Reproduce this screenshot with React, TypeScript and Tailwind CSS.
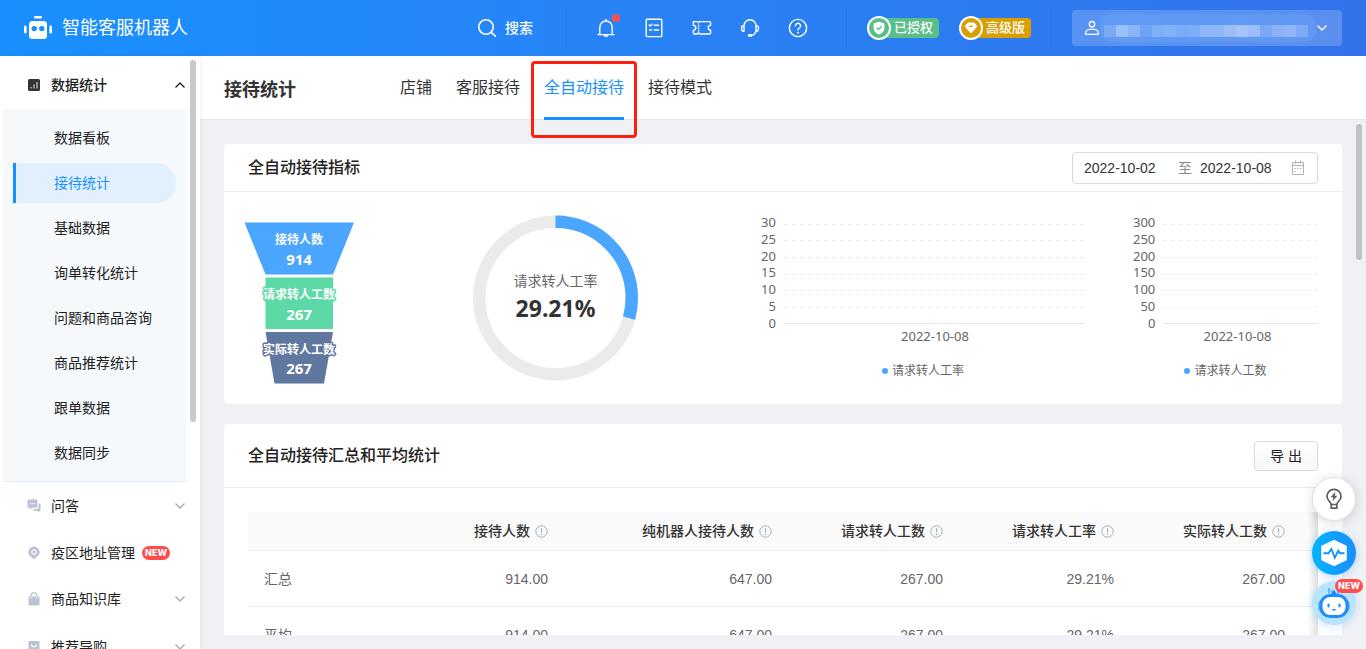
import React from "react";

const TEXT_FONT =
  "font-['Liberation_Sans','Noto_Sans_CJK_SC',sans-serif]";
const CHART_FONT = "font-['Noto_Sans','Noto_Sans_CJK_SC',sans-serif]";

function Logo() {
  return (
    <svg width="28" height="24" viewBox="0 0 28 24" fill="#fff" aria-hidden="true">
      <rect x="10" y="0" width="8" height="2.6" rx="1.3" />
      <rect x="0" y="9.500" width="2.6" height="8" rx="1.3" />
      <rect x="25.4" y="9.500" width="2.6" height="8" rx="1.3" />
      <rect x="5" y="5" width="18" height="18" rx="3.5" />
      <circle cx="10.2" cy="12.600" r="2.7" fill="#1b8dff" />
      <circle cx="17.8" cy="12.600" r="2.7" fill="#1b8dff" />
    </svg>
  );
}

function Line({ children, size = 20, sw = 1.4 }: { children: React.ReactNode; size?: number; sw?: number }) {
  return (
    <svg
      width={size}
      height={size}
      viewBox="0 0 20 20"
      fill="none"
      stroke="currentColor"
      strokeWidth={sw}
      strokeLinecap="round"
      strokeLinejoin="round"
      aria-hidden="true"
    >
      {children}
    </svg>
  );
}

const SearchIcon = () => (
  <Line sw={1.6}>
    <circle cx="9" cy="9" r="7.2" />
    <path d="M14.3 14.3 18.4 18.2" />
  </Line>
);
const BellIcon = () => (
  <Line>
    <path d="M2 16.6h16M3.8 16.4V9.2a6.2 6.2 0 0 1 12.4 0v7.2M10 3V1.4M8.2 16.8a1.8 1.6 0 0 0 3.6 0" />
  </Line>
);
const ListIcon = () => (
  <Line>
    <rect x="2.2" y="1.2" width="15.6" height="17.4" rx="1" />
    <path d="M5.2 7l1 1L8 6.2M10.2 7.2h4.4M5.6 12h1.8M10.2 12h4.4" />
  </Line>
);
const TicketIcon = () => (
  <Line>
    <path d="M1.600 3.600h3.800l1.200 1.200 1.200-1.200h9.600a1.200 1.200 0 0 1 1.200 1.200v2.600a2.400 2.400 0 0 0 0 4.800v2.600a1.200 1.200 0 0 1-1.200 1.200H7.800l-1.200-1.200-1.200 1.200H2.600a1.200 1.200 0 0 1-1.200-1.200v-2.600a2.400 2.400 0 0 0 0-4.800V3.800z" />
    <path d="M6.600 7.200v.8M6.600 10v.8M6.600 12.600v.4" />
  </Line>
);
const HeadsetIcon = () => (
  <Line>
    <path d="M4 13.2H3.2A1.6 1.6 0 0 1 1.6 11.6V9.4a1.6 1.6 0 0 1 1.6-1.6H4zM16 7.8h.8a1.6 1.6 0 0 1 1.6 1.6v2.2a1.6 1.6 0 0 1-1.6 1.6H16zM4 7.8a6 6 0 0 1 12 0M16 13.2c-.6 2.4-2 3.800-4.400 4.300" />
    <path d="M9.2 17.4h1.6" strokeWidth="2.6" />
  </Line>
);
const HelpIcon = () => (
  <Line>
    <circle cx="10" cy="10" r="8.6" />
    <path d="M7.4 7.8a2.6 2.5 0 1 1 3.9 2.2c-.9.5-1.3.9-1.3 1.9" />
    <path d="M10 14.6v.1" strokeWidth="1.8" />
  </Line>
);

function Chevron({ up = false, className = "" }: { up?: boolean; className?: string }) {
  return (
    <svg width="12" height="8" viewBox="0 0 12 8" fill="none" stroke="currentColor" strokeWidth="1.4" className={className} aria-hidden="true">
      <path d={up ? "M1.5 6.5 6 2l4.5 4.5" : "M1.5 1.5 6 6l4.5-4.5"} />
    </svg>
  );
}

const MASK = [
  "#7baaf5", "#9ac0fa", "#8ab6f8", "#6ea3f5", "#7fb0f7", "#82b2f8", "#7aabf6", "#7cadf7", "#8fb6f7",
  "#8fb6f7", "#9bbdf8", "#a5c4f9", "#9bbdf9", "#7ca9f5", "#8db1f6", "#91b5f6", "#7ea9f5",
];

function Header() {
  const tools = [
    { label: "通知", icon: <BellIcon />, dot: true },
    { label: "任务", icon: <ListIcon /> },
    { label: "工单", icon: <TicketIcon /> },
    { label: "客服", icon: <HeadsetIcon /> },
    { label: "帮助", icon: <HelpIcon /> },
  ];
  return (
    <header className="flex h-14 shrink-0 items-center bg-linear-to-r from-[#1890ff] to-[#3273ec] px-6 text-white">
      <a href="#" className="flex items-center gap-2.5">
        <Logo />
        <span className="text-lg leading-7">智能客服机器人</span>
      </a>
      <div className="ml-auto flex items-center">
        <button type="button" className="flex items-center gap-2 pr-8 text-sm font-medium">
          <SearchIcon />
          搜索
        </button>
        <span className="h-10 w-px bg-black/5" />
        <div className="flex pl-4 pr-6">
          {tools.map((t) => (
            <button key={t.label} type="button" aria-label={t.label} className="relative flex w-12 justify-center">
              {t.icon}
              {t.dot && <span className="absolute -top-1 right-2.5 size-2 rounded-full bg-[#ff4d4f]" />}
            </button>
          ))}
        </div>
        <span className="h-10 w-px bg-black/5" />
        <div className="flex gap-5 px-5">
          <span className="flex h-6 w-[72px] items-center">
            <span className="z-10 flex size-6 shrink-0 items-center justify-center rounded-full border-2 border-white bg-[#57bf87]">
              <svg width="14" height="14" viewBox="0 0 14 14" aria-hidden="true">
                <path d="M7 .8 12.4 2.6v4.6c0 3-2.2 5-5.4 6.2C3.800 12.200 1.600 10.200 1.600 7.200V2.600z" fill="#fff" />
                <path d="M4.500 6.600 6.400 8.500 9.600 5.300" fill="none" stroke="#57bf87" strokeWidth="1.300" />
              </svg>
            </span>
            <span className="-ml-3 flex h-5 flex-1 items-center justify-end rounded bg-[#57bf87] pr-1.5 text-[13px] font-medium">已授权</span>
          </span>
          <span className="flex h-6 w-[72px] items-center">
            <span className="z-10 flex size-6 shrink-0 items-center justify-center rounded-full border-2 border-white bg-[#d99e00]">
              <svg width="14" height="14" viewBox="0 0 14 14" aria-hidden="true">
                <path d="M3.800 2h6.400l2.600 3.400L7 12 1.200 5.400z" fill="#fff" stroke="#fff" strokeWidth="1" strokeLinejoin="round" />
                <path d="M5.200 5.400h3.600" stroke="#d99e00" strokeWidth="1.200" />
              </svg>
            </span>
            <span className="-ml-3 flex h-5 flex-1 items-center justify-end rounded bg-[#d99e00] pr-1.5 text-[13px] font-medium">高级版</span>
          </span>
        </div>
        <span className="h-10 w-px bg-black/5" />
        <button type="button" aria-label="账号" className="ml-5 flex h-9 w-[270px] items-center rounded bg-white/20 pl-3 pr-3.5">
          <svg width="16" height="16" viewBox="0 0 16 16" fill="none" stroke="#fff" strokeWidth="1.300" aria-hidden="true">
            <circle cx="8" cy="4.200" r="2.700" />
            <path d="M2.600 14.400C1 14.400 1.200 12 2.600 10.600 4.800 8.500 11.200 8.500 13.400 10.600c1.400 1.400 1.600 3.800 0 3.800z" />
          </svg>
          <span className="flex h-7 flex-1 items-center rounded-xl bg-[#659ff6]/60 pl-1">
            <span className="mt-1.5 flex h-3">
              {MASK.map((c, i) => (
                <span key={i} className="w-3" style={{ backgroundColor: c }} />
              ))}
            </span>
          </span>
          <Chevron />
        </button>
      </div>
    </header>
  );
}

const SUB_ITEMS = ["数据看板", "接待统计", "基础数据", "询单转化统计", "问题和商品咨询", "商品推荐统计", "跟单数据", "数据同步"];

const NewTag = () => (
  <span className="rounded-full bg-[#ff4d4f] px-[3px] text-[9px] leading-[14px] font-extrabold text-white font-['Inter',sans-serif]">NEW</span>
);

function NavRow({ icon, label, tag, chevron = true }: { icon: React.ReactNode; label: string; tag?: boolean; chevron?: boolean }) {
  return (
    <a href="#" className={`flex shrink-0 items-center pl-[27px] pr-3.5 ${chevron ? "h-12" : "h-[45px]"}`}>
      <svg width="14" height="14" viewBox="0 0 14 14" fill="#b9c3d3" aria-hidden="true">{icon}</svg>
      <span className="ml-2.5">{label}</span>
      {tag && <span className="ml-[7px] flex"><NewTag /></span>}
      {chevron && <Chevron className="ml-auto text-[#aaa]" />}
    </a>
  );
}

function Sidebar() {
  return (
    <nav className="relative z-10 flex w-[200px] shrink-0 flex-col overflow-hidden bg-white pt-[5px] text-sm text-[#222] shadow-[1px_0_5px_rgba(0,0,0,0.06)]">
      <a href="#" className="flex h-12 shrink-0 items-center pl-[27px] pr-3.5 font-medium">
        <svg width="14" height="14" viewBox="0 0 14 14" aria-hidden="true">
          <rect x="1" y="1" width="12" height="12" rx="1.500" fill="#333" />
          <path d="M4 10.500V9M7 10.500v-4M10 10.500V4" stroke="#ddd" strokeWidth="1.100" />
        </svg>
        <span className="ml-2.5">数据统计</span>
        <Chevron up className="ml-auto" />
      </a>
      <ul className="ml-[3px] mr-3.5 flex shrink-0 flex-col gap-[5px] border-b border-[#e1edfb] bg-[#f5f9fc] pt-[9px] pb-2">
        {SUB_ITEMS.map((s) => (
          <li key={s} className="ml-2.5 mr-2.5">
            <a
              href="#"
              className={
                s === "接待统计"
                  ? "flex h-10 items-center rounded-r-full border-l-3 border-[#1890ff] bg-[#e2f0fe] pl-[38px] text-[#1890ff]"
                  : "flex h-10 items-center border-l-3 border-transparent pl-[38px]"
              }
            >
              {s}
            </a>
          </li>
        ))}
      </ul>
      <NavRow
        label="问答"
        icon={
          <>
            <path d="M1.500.5h7.800a1 1 0 0 1 1 1v6.200a1 1 0 0 1-1 1H5.500L3.200 10.500V8.700H1.500a1 1 0 0 1-1-1V1.500a1 1 0 0 1 1-1z" />
            <path d="M11.500 4.500h1a1 1 0 0 1 1 1v5.200a1 1 0 0 1-1 1v1.600L10.400 11.700H6.500V10h5z" />
            <path d="M3 4h1.100v1.200H3zM5 4h1.100v1.200H5zM7 4h1.100v1.200H7z" fill="#fff" />
          </>
        }
      />
      <NavRow
        label="疫区地址管理"
        tag
        chevron={false}
        icon={
          <>
            <path d="M7 .5a5.600 5.600 0 0 1 5.600 5.600C12.600 9.300 9.500 11.300 7 13.500 4.500 11.300 1.400 9.300 1.400 6.100A5.600 5.600 0 0 1 7 .5z" />
            <circle cx="7" cy="6" r="2.200" stroke="#fff" strokeWidth="1.100" />
          </>
        }
      />
      <NavRow
        label="商品知识库"
        icon={
          <>
            <path d="M1.500 4.500h11v8a1 1 0 0 1-1 1h-9a1 1 0 0 1-1-1z" />
            <path d="M4.200 6.500V3.600a2.800 2.800 0 0 1 5.600 0v2.900" fill="none" stroke="#b9c3d3" strokeWidth="1.200" />
            <path d="M4.200 5.200v1.600M9.800 5.200v1.600" stroke="#fff" strokeWidth="1" />
          </>
        }
      />
      <NavRow
        label="推荐导购"
        icon={
          <>
            <rect x="1.500" y="1" width="11" height="12" rx="1" />
            <path d="M4.300 4.200c.4 3.400 5 3.400 5.400 0" fill="none" stroke="#fff" strokeWidth="1.200" />
          </>
        }
      />
      <span className="absolute top-1 right-1 h-[362px] w-1.5 rounded-full bg-[#c9c9c9]" />
    </nav>
  );
}

function Tabs() {
  const base = "relative flex h-16 items-center text-base";
  return (
    <div className="relative flex h-16 shrink-0 items-center border-b border-[#e8e8ea] bg-white pl-6">
      <h1 className="pt-1 text-lg font-bold text-[#333]">接待统计</h1>
      <div role="tablist" className="ml-[104px] flex gap-6 text-[#333]">
        {["店铺", "客服接待", "全自动接待", "接待模式"].map((t) =>
          t === "全自动接待" ? (
            <button key={t} role="tab" aria-selected="true" type="button" className={`${base} text-[#1890ff]`}>
              {t}
              <span className="absolute inset-x-0 bottom-0 h-[3px] bg-[#1890ff]" />
              <span className="absolute -inset-x-[13px] top-[5px] -bottom-[18px] z-10 rounded-sm border-3 border-[#ff1d12]" />
            </button>
          ) : (
            <button key={t} role="tab" aria-selected="false" type="button" className={base}>
              {t}
            </button>
          ),
        )}
      </div>
    </div>
  );
}

function Funnel() {
  const stroke = { paintOrder: "stroke" as const, strokeLinejoin: "round" as const };
  return (
    <svg width="110" height="162" viewBox="0 0 110 162" textAnchor="middle" fill="#fff" className={`${CHART_FONT} font-bold`} role="img" aria-label="接待漏斗">
      <path d="M.5.500h109.500L89 52.500H21.500z" fill="#4aa6ff" />
      <path d="M21.500 55.500H89v51.500H21.500z" fill="#5cd9a6" />
      <path d="M21.500 110H89l-9 51.500H30.500z" fill="#60779f" />
      <g fontSize="12">
        <text x="55" y="22">接待人数</text>
        <text x="55" y="77" stroke="#5cd9a6" strokeWidth="3" style={stroke}>请求转人工数</text>
        <text x="55" y="132" stroke="#60779f" strokeWidth="3" style={stroke}>实际转人工数</text>
      </g>
      <g fontSize="15">
        <text x="55" y="43">914</text>
        <text x="55" y="98">267</text>
        <text x="55" y="152">267</text>
      </g>
    </svg>
  );
}

function Gauge() {
  const r = 76.25;
  const c = 2 * Math.PI * r;
  return (
    <svg width="166" height="166" viewBox="0 0 166 166" textAnchor="middle" className={CHART_FONT} role="img" aria-label="请求转人工率">
      <circle cx="82.500" cy="83" r={r} fill="none" stroke="#ebebeb" strokeWidth="12.500" />
      <circle cx="82.500" cy="83" r={r} fill="none" stroke="#4aa6ff" strokeWidth="12.500" strokeDasharray={`${c * 0.2921} ${c}`} transform="rotate(-90 82.5 83)" />
      <text x="82.500" y="71" fontSize="14" fill="#666">请求转人工率</text>
      <text x="82.500" y="102" fontSize="23" fontWeight="700" fill="#333">29.21%</text>
    </svg>
  );
}

function AxisChart({ ticks, name }: { ticks: number[]; name: string }) {
  return (
    <div className={`flex flex-col text-[#666] ${CHART_FONT}`}>
      <div className="flex gap-2">
        <div className="-mt-2.5 flex h-[117px] flex-col justify-between text-right text-[13px] leading-4">
          {ticks.map((t) => (
            <span key={t}>{t}</span>
          ))}
        </div>
        <svg className="h-[101px] min-w-0 flex-1" aria-hidden="true">
          {[0, 16, 33, 50, 66, 83].map((y) => (
            <line key={y} x1="0" x2="100%" y1={y + 0.5} y2={y + 0.5} stroke="#ebebeb" strokeDasharray="4 4" />
          ))}
          <line x1="0" x2="100%" y1="99.5" y2="99.5" stroke="#e8e8e8" />
        </svg>
      </div>
      <div className="-mt-[5px] pl-6 text-center text-[13px] leading-5">2022-10-08</div>
      <div className="mt-[15px] flex items-center justify-center gap-1 text-xs leading-5">
        <span className="size-1.5 rounded-full bg-[#4aa6ff]" />
        {name}
      </div>
    </div>
  );
}

function Metrics() {
  return (
    <section className="rounded bg-white">
      <div className="flex h-12 items-center justify-between border-b border-[#ececec] px-6">
        <h2 className="text-base font-medium text-[#222]">全自动接待指标</h2>
        <div className="flex h-8 w-[246px] items-center rounded-sm border border-[#d9d9d9] px-[11px] text-sm text-[#333]">
          <input aria-label="开始日期" defaultValue="2022-10-02" className="w-[94px] outline-none" />
          <span className="mr-2 text-[#888]">至</span>
          <input aria-label="结束日期" defaultValue="2022-10-08" className="w-20 flex-1 outline-none" />
          <svg width="16" height="16" viewBox="0 0 16 16" fill="none" stroke="#b5b5b5" aria-hidden="true">
            <path d="M2.500 2.500h11v12h-11zM2.500 5.500h11M5.500.5v3.500M10.500.5v3.500" />
            <path d="M4.500 8.500H6M7.200 8.500h1.500M10 8.500h1.500M4.500 11.500H6" />
          </svg>
        </div>
      </div>
      <div className="flex h-[212px] items-start">
        <div className="flex w-[150px] shrink-0 justify-center pt-[30px]">
          <Funnel />
        </div>
        <div className="flex flex-1 justify-center pt-[23px]">
          <Gauge />
        </div>
        <div className="w-[348px] shrink-0 pt-8 pl-6">
          <AxisChart ticks={[30, 25, 20, 15, 10, 5, 0]} name="请求转人工率" />
        </div>
        <div className="w-[257px] shrink-0 pt-8 pr-6 pl-12">
          <AxisChart ticks={[300, 250, 200, 150, 100, 50, 0]} name="请求转人工数" />
        </div>
      </div>
    </section>
  );
}

const COLUMNS = ["接待人数", "纯机器人接待人数", "请求转人工数", "请求转人工率", "实际转人工数"];
const ROWS = [
  ["汇总", "914.00", "647.00", "267.00", "29.21%", "267.00"],
  ["平均", "914.00", "647.00", "267.00", "29.21%", "267.00"],
];

function Summary() {
  return (
    <section className="rounded bg-white">
      <div className="flex h-16 items-center justify-between border-b border-[#ececec] px-6">
        <h2 className="text-base font-medium text-[#222]">全自动接待汇总和平均统计</h2>
        <button type="button" className="h-[30px] w-16 rounded-sm border border-[#d9d9d9] bg-linear-to-b from-white to-[#f7f7f7] text-sm text-[#222]">
          导 出
        </button>
      </div>
      <div className="p-6">
        <div className="relative">
          <table className="w-full table-fixed border-separate border-spacing-0 text-sm">
            <colgroup>
              <col />
              <col className="w-[171px]" />
              <col className="w-[224px]" />
              <col className="w-[171px]" />
              <col className="w-[171px]" />
              <col className="w-[171px]" />
              <col className="w-[17px]" />
            </colgroup>
            <thead>
              <tr className="h-[39px] bg-[#fafafa] text-[#333] *:border-b *:border-[#ececec]">
                <th />
                {COLUMNS.map((c) => (
                  <th key={c} scope="col" className="pr-4 font-medium">
                    <span className="flex items-center justify-end gap-[5px]">
                      {c}
                      <svg width="13" height="13" viewBox="0 0 13 13" fill="none" stroke="#a5b0b0" aria-hidden="true">
                        <circle cx="6.500" cy="6.500" r="5.700" />
                        <path d="M6.500 3.200v4.200M6.500 8.700v1.200" strokeWidth="1.200" />
                      </svg>
                    </span>
                  </th>
                ))}
                <th />
              </tr>
            </thead>
            <tbody>
              {ROWS.map((r) => (
                <tr key={r[0]} className="h-14 text-[#666] *:border-b *:border-[#ececec]">
                  <td className="pl-4">{r[0]}</td>
                  {r.slice(1).map((v, i) => (
                    <td key={i} className="pr-4 text-right">{v}</td>
                  ))}
                  <td />
                </tr>
              ))}
            </tbody>
          </table>
          <span className="absolute inset-y-0 right-0 w-2.5 bg-linear-to-r from-transparent to-black/12" />
        </div>
      </div>
    </section>
  );
}

function FloatingTools() {
  return (
    <div className="absolute right-2.5 bottom-6 z-20 flex flex-col">
      <button type="button" aria-label="建议" className="mb-2.5 flex size-11 items-center justify-center rounded-full border border-[#e2e2e2] bg-white shadow-[0_2px_12px_rgba(0,0,0,0.15)]">
        <svg width="18" height="22" viewBox="0 0 18 22" fill="none" stroke="#5c5c5c" strokeWidth="1.700" strokeLinejoin="round" aria-hidden="true">
          <path d="M6.200 16.500C6.200 14 2 12.600 2 8.400a7 7 0 0 1 14 0c0 4.200-4.200 5.600-4.200 8.100z" />
          <path d="M6.200 16.500v3.700h5.600v-3.700" />
          <path d="M10.400 3.800 5.600 9.300h2.700L7.600 13.200 12.400 7.700H9.700z" fill="#5c5c5c" stroke="none" />
        </svg>
      </button>
      <button type="button" aria-label="监控" className="mb-1.5 flex size-11 items-center justify-center rounded-full bg-linear-to-r from-[#02b4fa] to-[#1b8cff] shadow-[0_2px_8px_rgba(24,144,255,0.3)]">
        <svg width="28" height="28" viewBox="0 0 28 28" aria-hidden="true">
          <path d="M14 2 25.500 7.600V20.400L14 26 2.500 20.400V7.600z" fill="#fff" stroke="#fff" strokeWidth="2.500" strokeLinejoin="round" />
          <path d="M3.500 14.200H8.500l2.800-4.200 3.500 8.600 3.400-7 1.600 2.600h4.700" fill="none" stroke="#1294fc" strokeWidth="1.900" />
        </svg>
      </button>
      <button type="button" aria-label="智能助手" className="relative flex size-11 items-center justify-center rounded-full bg-[#b9e4ff] shadow-[0_2px_8px_rgba(24,144,255,0.2)]">
        <svg width="32" height="34" viewBox="0 0 32 34" aria-hidden="true">
          <path d="M11 2v5.500M14 4v3.500M20 3v5" stroke="#2f97f5" strokeWidth="1.200" />
          <path d="M12 10 16 4l4 6z" fill="#1d86f5" />
          <rect x="0.500" y="14" width="31" height="12" rx="4" fill="#4aa6ff" />
          <rect x="3" y="9.500" width="26" height="21" rx="9" fill="#fff" stroke="#1f8dfb" strokeWidth="3" />
          <path d="M10.500 18.500v1.800M21.500 18.500v1.800" stroke="#1f8dfb" strokeWidth="2.200" strokeLinecap="round" />
          <path d="M14.300 23.600c.8 1 2.600 1 3.400 0z" fill="#1f8dfb" stroke="#1f8dfb" strokeWidth=".8" />
        </svg>
        <span className="absolute -top-0.5 -right-[7px] flex"><NewTag /></span>
      </button>
    </div>
  );
}

export default function App() {
  return (
    <div className={`relative flex h-screen flex-col overflow-hidden bg-[#f0f1f5] ${TEXT_FONT}`}>
      <Header />
      <div className="flex min-h-0 flex-1">
        <Sidebar />
        <main className="relative flex min-w-0 flex-1 flex-col pb-3.5">
          <Tabs />
          <div className="min-h-0 flex-1 overflow-hidden px-6 pt-6">
            <div className="flex flex-col gap-5">
              <Metrics />
              <Summary />
            </div>
          </div>
          <span className="absolute top-[68px] right-1 h-[136px] w-1.5 rounded-full bg-[#c1c2c5]" />
        </main>
      </div>
      <FloatingTools />
    </div>
  );
}
